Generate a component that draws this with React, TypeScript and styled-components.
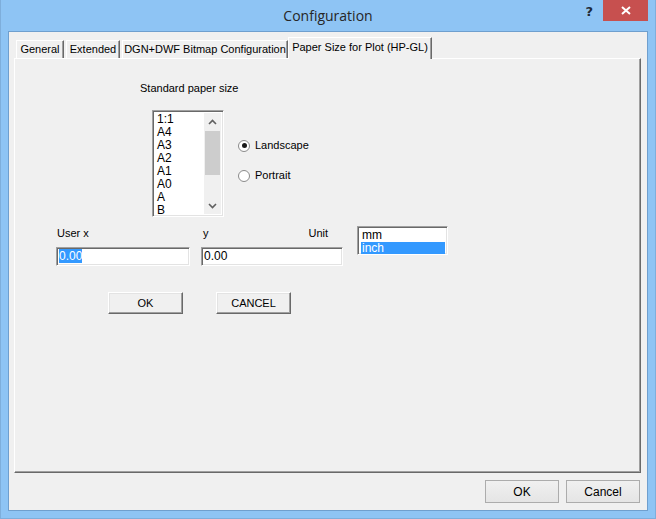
import React, { FC } from "react";
import styled, { createGlobalStyle, css } from "styled-components";

const GlobalStyle = createGlobalStyle`
  html, body {
    margin: 0;
    padding: 0;
    background: #8ec4f4;
  }
  * {
    box-sizing: border-box;
  }
`;

const sunken = css`
  border-top: 1px solid #a0a0a0;
  border-left: 1px solid #a0a0a0;
  border-right: 1px solid #ffffff;
  border-bottom: 1px solid #ffffff;
  box-shadow: inset 1px 1px 0 #696969, inset -1px -1px 0 #e3e3e3;
`;

const Window = styled.div`
  width: 656px;
  height: 519px;
  display: flex;
  flex-direction: column;
  background: #8ec4f4;
  border: 1px solid #7eaedb;
  border-top: none;
  padding: 0 7px 7px 7px;
  font-family: "Liberation Sans", Arial, sans-serif;
`;

const TitleBar = styled.div`
  height: 31px;
  display: grid;
  grid-template-columns: 63px 1fr 63px;
  align-items: start;
`;

const Title = styled.div`
  grid-column: 2;
  text-align: center;
  font-family: "Open Sans", "Noto Sans", sans-serif;
  font-size: 14px;
  line-height: 31px;
  color: #262626;
`;

const Controls = styled.div`
  grid-column: 3;
  display: flex;
  justify-content: flex-end;
  align-items: flex-start;
`;

const HelpGlyph = styled.span`
  font-family: "DejaVu Sans", sans-serif;
  font-weight: bold;
  font-size: 13px;
  line-height: 23px;
  color: #1e2a36;
  margin-right: 10px;
`;

const CloseButton = styled.div`
  width: 45px;
  height: 21px;
  background: #c7504f;
  display: flex;
  align-items: center;
  justify-content: center;
`;

const Client = styled.div`
  flex: 1;
  display: flex;
  flex-direction: column;
  background: #f0f0f0;
  border: 1px solid #6f9fce;
  padding: 5px 6px 0 5px;
`;

const TabStrip = styled.div`
  height: 21px;
  display: flex;
  align-items: flex-end;
  padding-left: 2px;
  position: relative;
  z-index: 1;
`;

const Tab = styled.div<{ $active?: boolean; $w: number }>`
  width: ${p => p.$w}px;
  height: ${p => (p.$active ? 22 : 18)}px;
  margin: ${p => (p.$active ? "0 -1px -1px -2px" : "0 2px 0 0")};
  background: #f0f0f0;
  border-top: 1px solid #ffffff;
  border-left: 1px solid #ffffff;
  border-right: 1px solid #696969;
  box-shadow: inset -1px 0 0 #a0a0a0;
  font-size: 11px;
  color: #000;
  text-align: center;
  line-height: ${p => (p.$active ? 18 : 17)}px;
  white-space: nowrap;
`;

const Panel = styled.div`
  height: 415px;
  background: #f0f0f0;
  border-top: 1px solid #ffffff;
  border-left: 1px solid #ffffff;
  border-right: 1px solid #696969;
  border-bottom: 1px solid #696969;
  box-shadow: inset -1px -1px 0 #a0a0a0;
  display: flex;
  flex-direction: column;
  align-items: flex-start;
  font-size: 11px;
  color: #000;
`;

const SectionLabel = styled.div`
  margin: 23px 0 0 125px;
  line-height: 13px;
`;

const PaperRow = styled.div`
  display: flex;
  margin: 15px 0 0 137px;
`;

const ListBox = styled.div<{ $w: number; $h: number }>`
  ${sunken};
  width: ${p => p.$w}px;
  height: ${p => p.$h}px;
  background: #ffffff;
  display: flex;
  padding: 2px;
  overflow: hidden;
`;

const Items = styled.div`
  flex: 1;
  padding-left: 1px;
`;

const Item = styled.div<{ $selected?: boolean }>`
  font-size: 12px;
  line-height: 13px;
  height: 13px;
  padding-left: 1px;
  color: ${p => (p.$selected ? "#ffffff" : "#000000")};
  background: ${p => (p.$selected ? "#3399ff" : "transparent")};
`;

const ScrollBar = styled.div`
  width: 17px;
  background: #f0f0f0;
  display: flex;
  flex-direction: column;
  align-items: center;
`;

const ScrollArrow = styled.div`
  height: 17px;
  width: 17px;
  display: flex;
  align-items: center;
  justify-content: center;
`;

const ScrollTrack = styled.div`
  flex: 1;
  width: 17px;
  padding-top: 1px;
`;

const Thumb = styled.div`
  width: 15px;
  margin-left: 1px;
  height: 44px;
  background: #cdcdcd;
`;

const RadioGroup = styled.div`
  display: flex;
  flex-direction: column;
  gap: 17px;
  margin: 29px 0 0 14px;
`;

const RadioRow = styled.label`
  display: flex;
  align-items: center;
  gap: 5px;
  line-height: 13px;
`;

const RadioCircle = styled.span<{ $checked?: boolean }>`
  width: 12px;
  height: 12px;
  border-radius: 50%;
  border: 1px solid #8a8a8a;
  background: #ffffff;
  display: flex;
  align-items: center;
  justify-content: center;
  &::after {
    content: "";
    width: 5px;
    height: 5px;
    border-radius: 50%;
    background: ${p => (p.$checked ? "#1a1a1a" : "transparent")};
  }
`;

const FieldGrid = styled.div`
  display: grid;
  grid-template-columns: 134px 11px 142px 14px 91px;
  grid-template-rows: 21px 19px;
  margin: 9px 0 0 41px;
`;

const FieldLabel = styled.div<{ $col: number }>`
  grid-column: ${p => p.$col};
  grid-row: 1;
  display: flex;
  justify-content: space-between;
  padding: 1px 15px 0 ${p => (p.$col === 1 ? 1 : 2)}px;
  line-height: 13px;
`;

const TextInput = styled.div<{ $col: number }>`
  ${sunken};
  grid-column: ${p => p.$col};
  grid-row: 2;
  background: #ffffff;
  font-size: 12px;
  line-height: 15px;
  padding: 1px 2px;
`;

const Selected = styled.span`
  background: #3399ff;
  color: #ffffff;
`;

const UnitBox = styled.div`
  grid-column: 5;
  grid-row: 1 / span 2;
  align-self: start;
`;

const ButtonRow = styled.div`
  display: flex;
  gap: 33px;
  margin: 26px 0 0 93px;
`;

const ClassicButton = styled.div`
  width: 75px;
  height: 22px;
  background: #f0f0f0;
  border-top: 1px solid #ffffff;
  border-left: 1px solid #ffffff;
  border-right: 1px solid #696969;
  border-bottom: 1px solid #696969;
  box-shadow: inset -1px -1px 0 #a0a0a0, inset 1px 1px 0 #e3e3e3;
  display: flex;
  align-items: center;
  justify-content: center;
  font-size: 11px;
`;

const Footer = styled.div`
  display: flex;
  justify-content: flex-end;
  gap: 7px;
  padding: 7px 1px 0 0;
`;

const DialogButton = styled.div`
  width: 74px;
  height: 23px;
  border: 1px solid #acacac;
  background: linear-gradient(#f0f0f0, #e5e5e5);
  display: flex;
  align-items: center;
  justify-content: center;
  font-family: "Liberation Sans", Arial, sans-serif;
  font-size: 12px;
  color: #000;
`;

const Chevron: FC<{ up?: boolean }> = ({ up }) => (
  <svg width="9" height="6" viewBox="0 0 9 6">
    <path
      d={up ? "M1 5 L4.5 1.5 L8 5" : "M1 1 L4.5 4.5 L8 1"}
      stroke="#606060"
      strokeWidth="1.6"
      fill="none"
    />
  </svg>
);

const tabs = [
  { label: "General", w: 48 },
  { label: "Extended", w: 54 },
  { label: "DGN+DWF Bitmap Configuration", w: 166 },
  { label: "Paper Size for Plot (HP-GL)", w: 144, active: true }
];

const sizes = ["1:1", "A4", "A3", "A2", "A1", "A0", "A", "B"];

const App: FC = () => {
  return (
    <>
      <GlobalStyle />
      <Window>
        <TitleBar>
          <Title>Configuration</Title>
          <Controls>
            <HelpGlyph>?</HelpGlyph>
            <CloseButton>
              <svg width="10" height="9" viewBox="0 0 10 9">
                <path d="M1 1 L9 8 M9 1 L1 8" stroke="#ffffff" strokeWidth="2" />
              </svg>
            </CloseButton>
          </Controls>
        </TitleBar>
        <Client>
          <TabStrip>
            {tabs.map(tab => (
              <Tab key={tab.label} $w={tab.w} $active={tab.active}>
                {tab.label}
              </Tab>
            ))}
          </TabStrip>
          <Panel>
            <SectionLabel>Standard paper size</SectionLabel>
            <PaperRow>
              <ListBox $w={72} $h={107}>
                <Items>
                  {sizes.map(s => (
                    <Item key={s}>{s}</Item>
                  ))}
                </Items>
                <ScrollBar>
                  <ScrollArrow>
                    <Chevron up />
                  </ScrollArrow>
                  <ScrollTrack>
                    <Thumb />
                  </ScrollTrack>
                  <ScrollArrow>
                    <Chevron />
                  </ScrollArrow>
                </ScrollBar>
              </ListBox>
              <RadioGroup>
                <RadioRow>
                  <RadioCircle $checked />
                  Landscape
                </RadioRow>
                <RadioRow>
                  <RadioCircle />
                  Portrait
                </RadioRow>
              </RadioGroup>
            </PaperRow>
            <FieldGrid>
              <FieldLabel $col={1}>User x</FieldLabel>
              <FieldLabel $col={3}>
                <span>y</span>
                <span>Unit</span>
              </FieldLabel>
              <TextInput $col={1}>
                <Selected>0.00</Selected>
              </TextInput>
              <TextInput $col={3}>0.00</TextInput>
              <UnitBox>
                <ListBox $w={91} $h={29}>
                  <Items>
                    <Item>mm</Item>
                    <Item $selected>inch</Item>
                  </Items>
                </ListBox>
              </UnitBox>
            </FieldGrid>
            <ButtonRow>
              <ClassicButton>OK</ClassicButton>
              <ClassicButton>CANCEL</ClassicButton>
            </ButtonRow>
          </Panel>
          <Footer>
            <DialogButton>OK</DialogButton>
            <DialogButton>Cancel</DialogButton>
          </Footer>
        </Client>
      </Window>
    </>
  );
};

export default App;
